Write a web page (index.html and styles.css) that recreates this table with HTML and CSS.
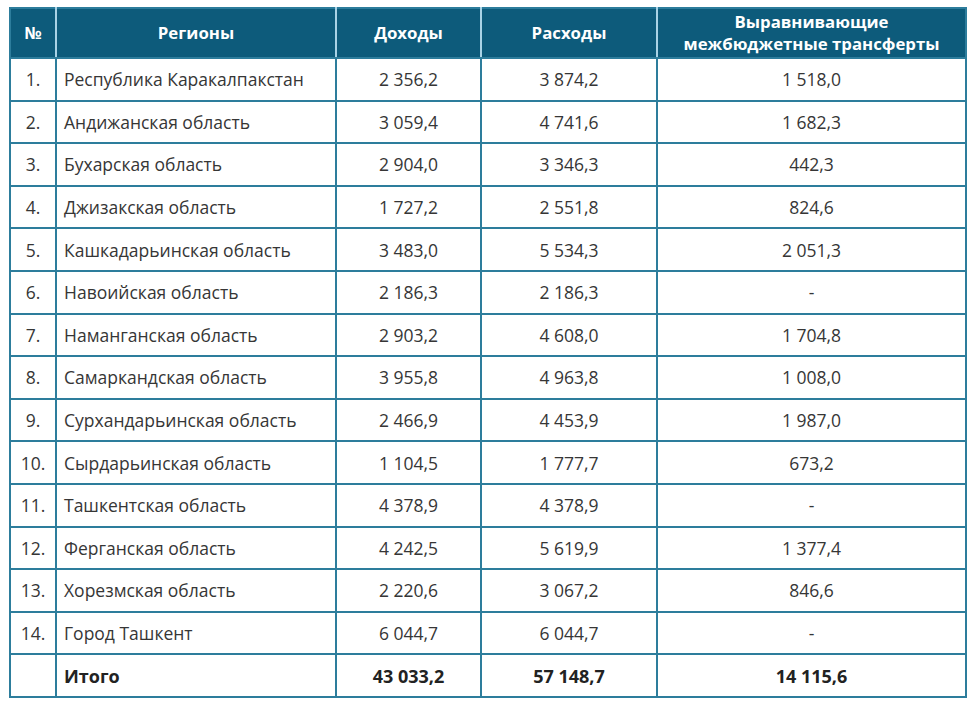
FILE: index.html
```html
<!DOCTYPE html>
<html lang="ru">
<head>
<meta charset="utf-8">
<link rel="stylesheet" href="styles.css">
</head>
<body>
<table class="budget">
  <colgroup>
    <col class="c-num"><col class="c-reg"><col class="c-inc"><col class="c-exp"><col class="c-tr">
  </colgroup>
  <thead>
    <tr>
      <th>№</th>
      <th>Регионы</th>
      <th>Доходы</th>
      <th>Расходы</th>
      <th>Выравнивающие<br>межбюджетные трансферты</th>
    </tr>
  </thead>
  <tbody>
    <tr><td class="num">1.</td><td class="reg">Республика Каракалпакстан</td><td>2 356,2</td><td>3 874,2</td><td>1 518,0</td></tr>
    <tr><td class="num">2.</td><td class="reg">Андижанская область</td><td>3 059,4</td><td>4 741,6</td><td>1 682,3</td></tr>
    <tr><td class="num">3.</td><td class="reg">Бухарская область</td><td>2 904,0</td><td>3 346,3</td><td>442,3</td></tr>
    <tr><td class="num">4.</td><td class="reg">Джизакская область</td><td>1 727,2</td><td>2 551,8</td><td>824,6</td></tr>
    <tr><td class="num">5.</td><td class="reg">Кашкадарьинская область</td><td>3 483,0</td><td>5 534,3</td><td>2 051,3</td></tr>
    <tr><td class="num">6.</td><td class="reg">Навоийская область</td><td>2 186,3</td><td>2 186,3</td><td>-</td></tr>
    <tr><td class="num">7.</td><td class="reg">Наманганская область</td><td>2 903,2</td><td>4 608,0</td><td>1 704,8</td></tr>
    <tr><td class="num">8.</td><td class="reg">Самаркандская область</td><td>3 955,8</td><td>4 963,8</td><td>1 008,0</td></tr>
    <tr><td class="num">9.</td><td class="reg">Сурхандарьинская область</td><td>2 466,9</td><td>4 453,9</td><td>1 987,0</td></tr>
    <tr><td class="num">10.</td><td class="reg">Сырдарьинская область</td><td>1 104,5</td><td>1 777,7</td><td>673,2</td></tr>
    <tr><td class="num">11.</td><td class="reg">Ташкентская область</td><td>4 378,9</td><td>4 378,9</td><td>-</td></tr>
    <tr><td class="num">12.</td><td class="reg">Ферганская область</td><td>4 242,5</td><td>5 619,9</td><td>1 377,4</td></tr>
    <tr><td class="num">13.</td><td class="reg">Хорезмская область</td><td>2 220,6</td><td>3 067,2</td><td>846,6</td></tr>
    <tr><td class="num">14.</td><td class="reg">Город Ташкент</td><td>6 044,7</td><td>6 044,7</td><td>-</td></tr>
    <tr class="total"><td class="num"></td><td class="reg">Итого</td><td>43 033,2</td><td>57 148,7</td><td>14 115,6</td></tr>
  </tbody>
</table>
</body>
</html>
```
FILE: styles.css
```css
html, body {
  margin: 0;
  background: #ffffff;
}
body {
  padding: 7px 0 0 9px;
  font-family: "Open Sans", "Noto Sans", sans-serif;
  color: #363636;
}
.budget {
  border-collapse: collapse;
  table-layout: fixed;
  width: 956px;
}
.c-num { width: 46px; }
.c-reg { width: 280px; }
.c-inc { width: 145px; }
.c-exp { width: 176px; }
.c-tr  { width: 309px; }

.budget th {
  background: #0d5b7b;
  color: #ffffff;
  font-weight: 700;
  font-size: 16.8px;
  line-height: 22px;
  height: 48px;
  padding: 0;
  text-align: center;
  white-space: nowrap;
  border: 2px solid #2d7d9c;
  border-left-color: #a9d3e6;
  border-right-color: #a9d3e6;
}
.budget th:first-child { border-left-color: #2d7d9c; }
.budget th:last-child { border-right-color: #2d7d9c; }

.budget td {
  border: 2px solid #2d7d9c;
  height: 40.6px;
  padding: 0;
  font-size: 17.5px;
  text-align: center;
  white-space: nowrap;
}
.budget td.reg {
  text-align: left;
  padding-left: 7px;
}
.budget tr.total td {
  font-weight: 700;
  font-size: 18px;
  color: #222;
}
```
